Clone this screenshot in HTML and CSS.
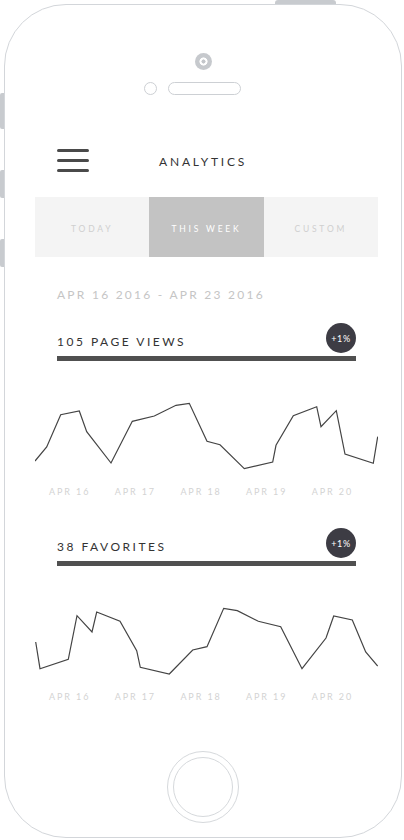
FILE: index.html
```html
<!DOCTYPE html>
<html lang="en">
<head>
<meta charset="utf-8">
<title>Analytics</title>
<link rel="stylesheet" href="styles.css">
</head>
<body>
<div class="phone">
  <span class="side-btn btn-top"></span>
  <span class="side-btn btn-l1"></span>
  <span class="side-btn btn-l2"></span>
  <span class="side-btn btn-l3"></span>
  <div class="camera"></div>
  <div class="sensors"><span class="sensor"></span><span class="speaker"></span></div>
  <main class="screen">
    <header class="header">
      <div class="menu"><span></span><span></span><span></span></div>
      <h1 class="title">ANALYTICS</h1>
    </header>
    <nav class="tabs">
      <div class="tab">TODAY</div>
      <div class="tab active">THIS WEEK</div>
      <div class="tab">CUSTOM</div>
    </nav>
    <p class="range">APR 16 2016 - APR 23 2016</p>
    <section class="stat">
      <div class="stat-head"><h2 class="stat-title">105 PAGE VIEWS</h2><span class="badge">+1%</span></div>
      <div class="stat-bar"></div>
      <svg class="chart" viewBox="0 0 343 80" width="343" height="80"><polyline points="0,66 11.7,52 25.7,19.7 44.3,16 51.7,36.7 76,68 97.3,26.3 119.3,21 141,10.3 154.3,8.3 172,46.3 185,49.7 209.3,73.7 237.7,67 241,50.3 258.3,20.7 281.7,11.7 286,31.7 301.3,15.7 310,59 338.3,68.3 342.7,41.7"/></svg>
      <div class="axis"><span>APR 16</span><span>APR 17</span><span>APR 18</span><span>APR 19</span><span>APR 20</span></div>
    </section>
    <section class="stat">
      <div class="stat-head"><h2 class="stat-title">38 FAVORITES</h2><span class="badge">+1%</span></div>
      <div class="stat-bar"></div>
      <svg class="chart" viewBox="0 0 343 80" width="343" height="80"><polyline points="0.7,42 5,68.7 33.3,59.3 42,15.7 57,32 61.7,12 85,21.3 101.7,50.7 105.3,67.3 134.3,74 157.7,50 172,46.7 188.7,8.3 202.3,10.7 223.3,21.3 245.7,26.7 267,68.7 291,38 298.7,16 317.3,20 330.7,52 342.7,66"/></svg>
      <div class="axis"><span>APR 16</span><span>APR 17</span><span>APR 18</span><span>APR 19</span><span>APR 20</span></div>
    </section>
  </main>
  <div class="home"><div class="home-inner"></div></div>
</div>
</body>
</html>
```
FILE: styles.css
```css
* { box-sizing: border-box; }
html, body { margin: 0; padding: 0; background: #fff; }
body { font-family: Lato, "Open Sans", sans-serif; color: #333; }

.phone {
  position: relative;
  margin: 4px 0 0 4px;
  width: 398px;
  height: 834px;
  border: 1px solid #d3d6da;
  border-radius: 62px;
  display: flex;
  flex-direction: column;
}

.side-btn { position: absolute; background: #c8cbcf; }
.btn-top { top: -5px; left: 270px; width: 61px; height: 4px; border-radius: 3px 3px 0 0; }
.btn-l1 { left: -5px; top: 88px; width: 4px; height: 36px; border-radius: 2px 0 0 2px; }
.btn-l2 { left: -5px; top: 165px; width: 4px; height: 28px; border-radius: 2px 0 0 2px; }
.btn-l3 { left: -5px; top: 234px; width: 4px; height: 28px; border-radius: 2px 0 0 2px; }

.camera {
  align-self: center;
  margin-top: 48px;
  width: 17px;
  height: 17px;
  border-radius: 50%;
  background: radial-gradient(circle, #c3c6ca 0 1.8px, #fff 2.3px 3.8px, #c6c9cd 4.3px);
}

.sensors {
  margin-top: 12px;
  display: flex;
  justify-content: center;
  height: 13px;
}
.sensors::after { content: ""; width: 21px; flex: none; }
.sensor {
  width: 13px; height: 13px;
  border: 1px solid #cdd0d4;
  border-radius: 50%;
}
.speaker {
  margin-left: 11px;
  width: 73px; height: 13px;
  border: 1px solid #cdd0d4;
  border-radius: 7px;
}

.screen { margin: 0 23px 0 30px; }

.header {
  margin-top: 54px;
  padding-left: 22px;
  display: flex;
  align-items: center;
}
.menu { width: 32px; display: flex; flex-direction: column; gap: 7px; }
.menu span { display: block; height: 3px; background: #4a4a4a; border-radius: 2px; }
.title {
  margin: 0 0 0 70px;
  padding-top: 2px;
  font-size: 12px;
  line-height: 14px;
  font-weight: 400;
  letter-spacing: 2.8px;
  color: #333;
}

.tabs {
  margin-top: 25px;
  height: 60px;
  display: grid;
  grid-template-columns: 1fr 1fr 1fr;
  background: #f4f4f4;
}
.tab {
  display: flex;
  align-items: center;
  justify-content: center;
  padding-top: 4px;
  font-size: 8.5px;
  letter-spacing: 2.8px;
  color: #cfcfcf;
}
.tab.active { background: #c3c3c3; color: #fff; }

.range {
  margin: 31px 0 0;
  padding-left: 22px;
  font-size: 12px;
  line-height: 14px;
  letter-spacing: 2.25px;
  color: #c5c5c5;
}

.stat { margin-top: 21px; }
.stat + .stat { margin-top: 31px; }
.stat-head {
  margin: 0 22px;
  height: 30px;
  display: flex;
  justify-content: space-between;
  align-items: flex-end;
}
.stat-title {
  margin: 0 0 4px;
  font-size: 12px;
  line-height: 14px;
  font-weight: 400;
  letter-spacing: 2.5px;
  color: #333;
}
.badge {
  align-self: flex-start;
  width: 30px;
  height: 30px;
  border-radius: 50%;
  background: #3d3c44;
  color: #fff;
  font-size: 9px;
  letter-spacing: 0.6px;
  display: flex;
  align-items: center;
  justify-content: center;
}
.stat-bar { margin: 3px 22px 0; height: 5px; background: #505050; }

.chart { display: block; margin-top: 34px; }
.chart polyline { fill: none; stroke: #444; stroke-width: 1.2; stroke-linejoin: miter; }

.axis {
  margin-top: 11px;
  padding-left: 14px;
  display: grid;
  grid-template-columns: repeat(5, 65.7px);
  font-size: 9px;
  line-height: 11px;
  letter-spacing: 1.9px;
  color: #d3d3d3;
}

.home {
  align-self: center;
  margin-top: auto;
  margin-bottom: 14px;
  width: 72px;
  height: 72px;
  border: 1.5px solid #d6d9dc;
  border-radius: 50%;
  display: flex;
  align-items: center;
  justify-content: center;
}
.home-inner {
  width: 60px;
  height: 60px;
  border: 1.5px solid #d6d9dc;
  border-radius: 50%;
}
```
